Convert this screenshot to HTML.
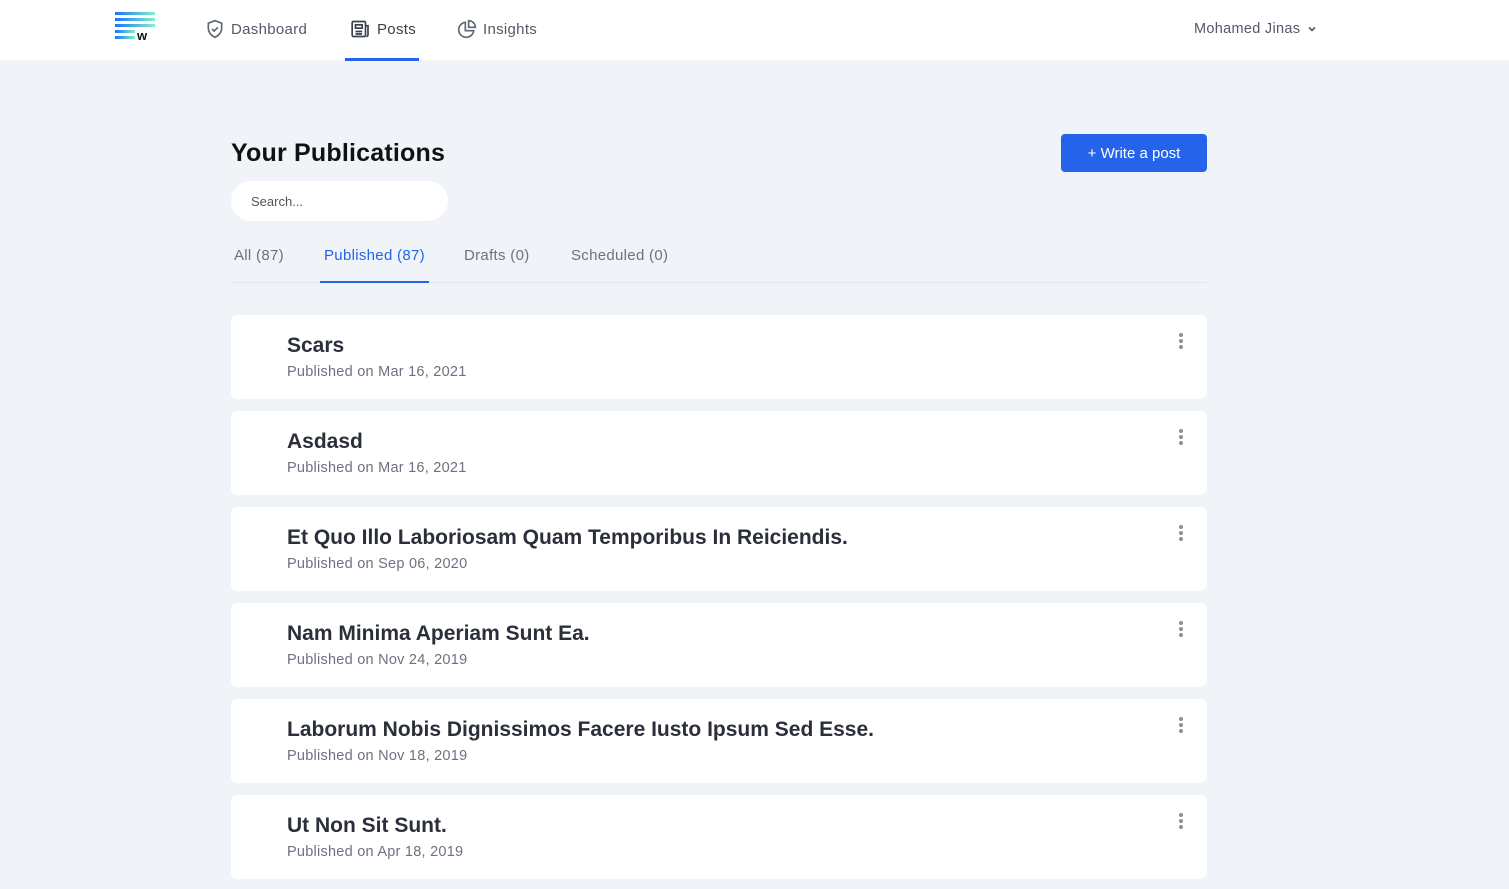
<!DOCTYPE html>
<html><head><meta charset="utf-8"><style>
*{box-sizing:border-box;margin:0;padding:0}
body{width:1509px;height:889px;overflow:hidden;background:#f0f3f8;font-family:"Liberation Sans",sans-serif;position:relative}
.top{position:absolute;left:0;top:0;width:1509px;height:60px;background:#fff}
.nav{position:absolute;top:-1px;height:60px;display:flex;align-items:center;font-size:15px;color:#525a68;letter-spacing:.3px}
.nav svg{margin-right:6px}
.act{position:absolute;left:345px;top:58px;width:74px;height:3px;background:#2563eb}
h1{position:absolute;left:231px;top:139px;font-size:25px;font-weight:bold;color:#0f1115;letter-spacing:.2px}
.btn{position:absolute;left:1061px;top:134px;width:146px;height:38px;background:#2563eb;border-radius:4px;color:#fff;font-size:15px;display:flex;align-items:center;justify-content:center}
.search{position:absolute;left:231px;top:181px;width:217px;height:40px;background:#fff;border-radius:20px;font-size:13px;color:#555;padding:13px 0 0 20px}
.tab{position:absolute;top:247px;font-size:15px;color:#6b7280;letter-spacing:.3px}
.tline{position:absolute;left:231px;top:282px;width:976px;height:1px;background:#e2e5ea}
.tact{position:absolute;left:320px;top:281px;width:109px;height:2px;background:#2563eb}
.card{position:absolute;left:231px;width:976px;height:84px;background:#fff;border-radius:6px}
.card .t{position:absolute;left:56px;top:19px;font-size:21px;font-weight:bold;color:#2b2f3a}
.card .s{position:absolute;left:56px;top:49px;font-size:14.5px;color:#6b7280;letter-spacing:.25px}
.dots{position:absolute;left:948px;top:18px;width:4px}
.dots i{display:block;width:4px;height:4px;border-radius:2px;background:#8a8f99;margin-bottom:2px}
</style></head><body>
<div class="top"></div>
<svg style="position:absolute;left:114px;top:11px" width="42" height="30">
<defs><linearGradient id="g" x1="0" x2="1"><stop offset="0" stop-color="#1a73ff"/><stop offset="1" stop-color="#7ff2c8"/></linearGradient></defs>
<rect x="1" y="1" width="40" height="3" fill="url(#g)"/><rect x="1" y="7" width="40" height="3" fill="url(#g)"/><rect x="1" y="13" width="40" height="3" fill="url(#g)"/><rect x="1" y="19" width="20" height="3" fill="url(#g)"/><rect x="1" y="25" width="20" height="3" fill="url(#g)"/>
<text x="23" y="29" font-family="Liberation Sans" font-weight="bold" font-size="13" fill="#111">w</text></svg>
<div class="nav" style="left:205px"><svg width="20" height="20" viewBox="0 0 24 24" fill="none" stroke="#5f6673" stroke-width="2"><path d="M12 2l8 3v6c0 5-3.5 9-8 11-4.5-2-8-6-8-11V5z"/><path d="M8.5 12l2.5 2.5 4.5-4.5"/></svg>Dashboard</div>
<div class="nav" style="left:350px;color:#3a404c"><svg width="21" height="20" viewBox="0 0 24 24" fill="none" stroke="#3a404c" stroke-width="2"><rect x="2" y="3" width="16" height="18" rx="1.5"/><path d="M18 8h3v11a2 2 0 0 1-2 2"/><rect x="6" y="7" width="8" height="4"/><path d="M6 15h8M6 18h8"/></svg>Posts</div>
<div class="nav" style="left:457px"><svg width="20" height="20" viewBox="0 0 24 24" fill="none" stroke="#5f6673" stroke-width="2"><path d="M10 4a9 9 0 1 0 10 10H10z"/><path d="M14 2a8 8 0 0 1 8 8h-8z"/></svg>Insights</div>
<div class="nav" style="left:1194px;font-size:14.5px">Mohamed Jinas <svg style="margin-left:7px" width="10" height="10" viewBox="0 0 10 10" fill="none" stroke="#525a68" stroke-width="1.6"><path d="M2 3.5l3 3 3-3"/></svg></div>
<div class="act"></div>
<h1>Your Publications</h1>
<div class="btn">+ Write a post</div>
<div class="search">Search...</div>
<div class="tab" style="left:234px">All (87)</div>
<div class="tab" style="left:324px;color:#2563eb">Published (87)</div>
<div class="tab" style="left:464px">Drafts (0)</div>
<div class="tab" style="left:571px">Scheduled (0)</div>
<div class="tline"></div><div class="tact"></div>
<div class="card" style="top:315px"><div class="t">Scars</div><div class="s">Published on Mar 16, 2021</div><div class="dots"><i></i><i></i><i></i></div></div>
<div class="card" style="top:411px"><div class="t">Asdasd</div><div class="s">Published on Mar 16, 2021</div><div class="dots"><i></i><i></i><i></i></div></div>
<div class="card" style="top:507px"><div class="t">Et Quo Illo Laboriosam Quam Temporibus In Reiciendis.</div><div class="s">Published on Sep 06, 2020</div><div class="dots"><i></i><i></i><i></i></div></div>
<div class="card" style="top:603px"><div class="t">Nam Minima Aperiam Sunt Ea.</div><div class="s">Published on Nov 24, 2019</div><div class="dots"><i></i><i></i><i></i></div></div>
<div class="card" style="top:699px"><div class="t">Laborum Nobis Dignissimos Facere Iusto Ipsum Sed Esse.</div><div class="s">Published on Nov 18, 2019</div><div class="dots"><i></i><i></i><i></i></div></div>
<div class="card" style="top:795px"><div class="t">Ut Non Sit Sunt.</div><div class="s">Published on Apr 18, 2019</div><div class="dots"><i></i><i></i><i></i></div></div>
</body></html>
